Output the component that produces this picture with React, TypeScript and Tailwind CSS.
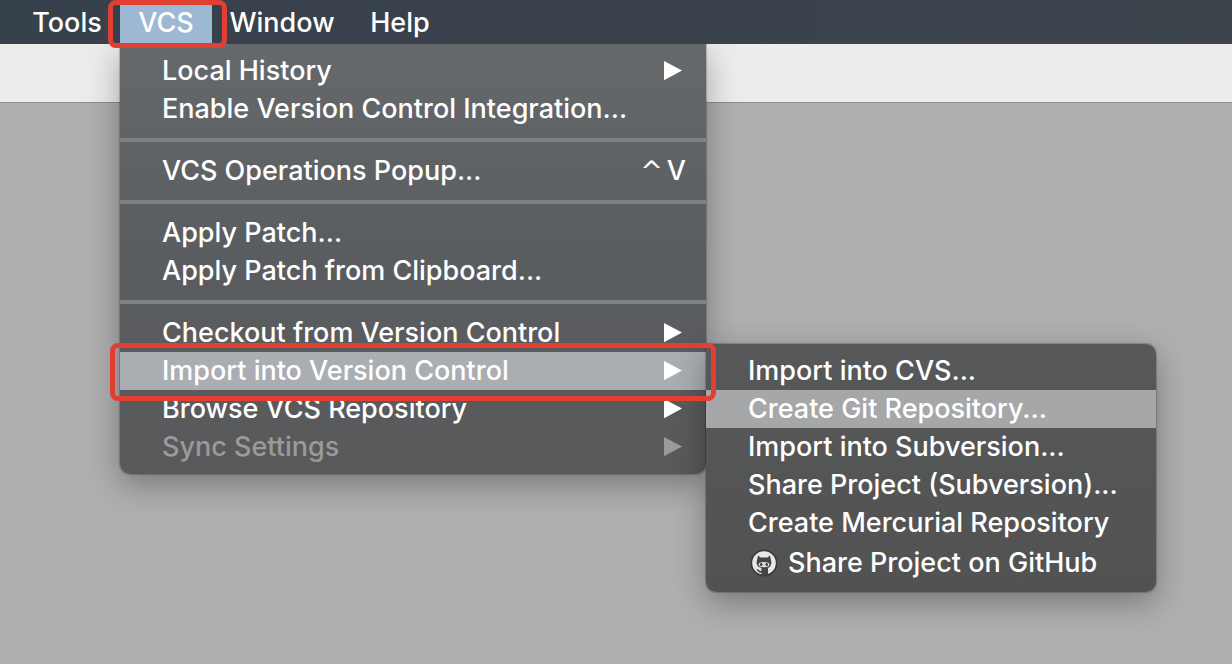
import React from "react";

type Entry = {
  label: string;
  submenu?: boolean;
  disabled?: boolean;
  active?: boolean;
  shortcut?: [string, string];
};

const groups: Entry[][] = [
  [
    { label: "Local History", submenu: true },
    { label: "Enable Version Control Integration..." },
  ],
  [{ label: "VCS Operations Popup...", shortcut: ["^", "V"] }],
  [{ label: "Apply Patch..." }, { label: "Apply Patch from Clipboard..." }],
  [
    { label: "Checkout from Version Control", submenu: true },
    { label: "Import into Version Control", submenu: true, active: true },
    { label: "Browse VCS Repository", submenu: true },
    { label: "Sync Settings", submenu: true, disabled: true },
  ],
];

const importEntries = [
  "Import into CVS...",
  "Create Git Repository...",
  "Import into Subversion...",
  "Share Project (Subversion)...",
  "Create Mercurial Repository",
];

function Arrow() {
  return (
    <svg className="mr-1 h-5 w-[18px] shrink-0" viewBox="0 0 18 20" fill="currentColor" aria-hidden="true">
      <path d="M0 0 L18 9.6 L0 19.2 Z" />
    </svg>
  );
}

function GitHubIcon() {
  return (
    <svg className="h-7 w-7 shrink-0" viewBox="0 0 28 28" aria-hidden="true">
      <circle cx="14" cy="14" r="13.4" fill="#3a3a3c" />
      <circle cx="14" cy="14" r="11.8" fill="#e8e8e8" />
      <path
        d="M8 6.4 L10.6 8.6 H17.4 L20 6.4 L20.8 10.4 Q22 13 21 16 Q20 18.4 18 19 V26.6 H11.4 V23.6 Q8.6 24 7.6 22 L6.2 20.4 Q8.4 20 9.4 21.6 Q10.2 22.2 11.4 21.8 V19 Q8 18.4 7 16 Q6 13 7.2 10.4 Z"
        fill="#454547"
      />
      <path
        d="M10.4 13.4 Q14 12.6 17.6 13.4 Q19.8 14 19.4 16 Q18.8 18.2 14 18.2 Q9.2 18.2 8.6 16 Q8.2 14 10.4 13.4 Z"
        fill="#dcdcdc"
      />
      <ellipse cx="11.2" cy="15.6" rx="1.3" ry="1.5" fill="#3c3c3e" />
      <ellipse cx="16.8" cy="15.6" rx="1.3" ry="1.5" fill="#3c3c3e" />
    </svg>
  );
}

function ImportMenu() {
  return (
    <ul
      role="menu"
      aria-label="Import into Version Control"
      className="absolute -top-2 left-full w-[450px] rounded-[10px] rounded-tl-none bg-linear-to-b from-[#575859] to-[#525252] py-2 text-white shadow-[0_10px_32px_rgba(0,0,0,0.32),0_0_1px_1px_rgba(0,0,0,0.2)]"
    >
      {importEntries.map((label) => (
        <li key={label} role="none">
          <button
            role="menuitem"
            className={
              "flex h-[38px] w-full items-center pl-[42px] text-left whitespace-nowrap " +
              (label.startsWith("Create Git") ? "bg-[#a6a7a9]" : "")
            }
          >
            {label}
          </button>
        </li>
      ))}
      <li role="none">
        <button role="menuitem" className="flex h-[42px] w-full items-center gap-[10px] pl-11 text-left whitespace-nowrap">
          <GitHubIcon />
          Share Project on GitHub
        </button>
      </li>
    </ul>
  );
}

function MenuRow({ entry }: { entry: Entry }) {
  return (
    <li role="none" className="relative">
      <button
        role="menuitem"
        disabled={entry.disabled}
        aria-haspopup={entry.submenu ? "menu" : undefined}
        className={
          "flex h-[38px] w-full items-center justify-between pr-5 pl-[42px] text-left whitespace-nowrap " +
          (entry.active ? "bg-[#aaadb1] " : "") +
          (entry.disabled ? "text-[#999a9c]" : "text-white")
        }
      >
        <span>{entry.label}</span>
        {entry.submenu && <Arrow />}
        {entry.shortcut && (
          <span className="flex items-baseline gap-1">
            <span className="font-['DejaVu_Sans',sans-serif]">{entry.shortcut[0]}</span>
            <span>{entry.shortcut[1]}</span>
          </span>
        )}
      </button>
      {entry.active && (
        <>
          <ImportMenu />
          <div className="pointer-events-none absolute -inset-x-[10px] -top-[9px] -bottom-[11px] z-10 rounded-lg border-5 border-[#e33e32]" />
        </>
      )}
    </li>
  );
}

function VcsMenu() {
  return (
    <ul
      role="menu"
      aria-label="VCS"
      className="absolute top-full left-0 w-[586px] rounded-b-[10px] bg-linear-to-b from-[#66696c] via-[#5a5d60] via-50% to-[#59595a] py-2 shadow-[0_10px_32px_rgba(0,0,0,0.32),0_0_1px_1px_rgba(0,0,0,0.2)] [clip-path:inset(0_-600px_-600px_-100px)]"
    >
      {groups.map((group, i) => (
        <React.Fragment key={group[0].label}>
          {i > 0 && <li role="separator" className="my-[10px] h-1 bg-[#7f8284]" />}
          {group.map((entry) => (
            <MenuRow key={entry.label} entry={entry} />
          ))}
        </React.Fragment>
      ))}
    </ul>
  );
}

export default function App() {
  return (
    <div className="flex min-h-screen flex-col overflow-hidden bg-[#afafaf] font-['Inter','Liberation_Sans',sans-serif] text-[27px] leading-8 font-medium">
      <header className="relative z-10 h-11 bg-linear-to-r from-[#37414b] to-[#3c434b] text-white">
        <nav className="flex h-full pl-[14px]" aria-label="Application">
          <button className="w-[106px] pt-0.5">Tools</button>
          <div className="relative w-[92px]">
            <button className="h-full w-full bg-[#9db8d3] pt-0.5" aria-haspopup="menu" aria-expanded="true">
              VCS
            </button>
            <VcsMenu />
            <div className="pointer-events-none absolute top-0 -right-[15px] -bottom-1 -left-3 rounded-lg border-5 border-[#e33e32]" />
          </div>
          <button className="w-[140px] pt-0.5">Window</button>
          <button className="w-24 pt-0.5">Help</button>
        </nav>
      </header>
      <div className="h-[59px] border-b border-[#8c8c8c] bg-[#ececec]" />
      <main className="flex-1" />
    </div>
  );
}
